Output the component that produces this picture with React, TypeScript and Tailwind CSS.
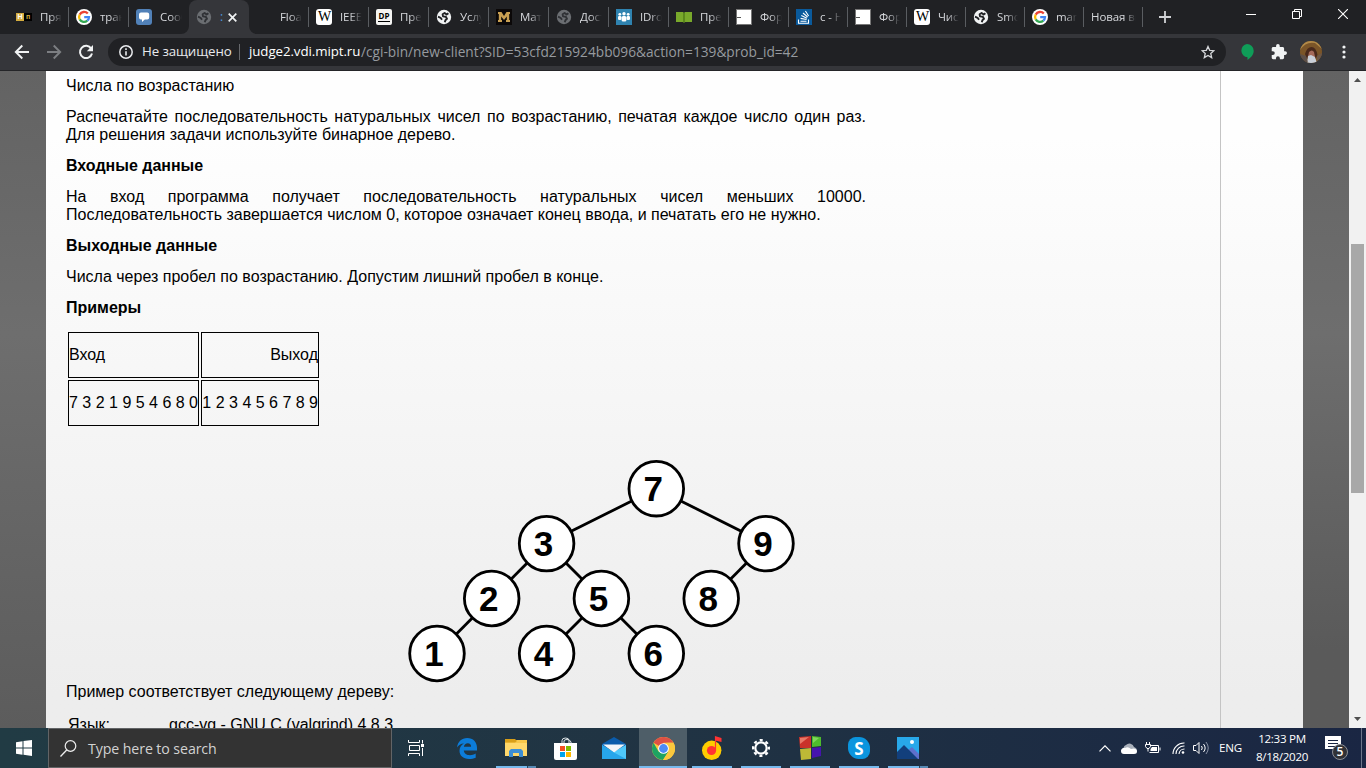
import type { ReactNode } from "react";

const Google = () => (
  <svg className="size-4" viewBox="0 0 16 16">
    <circle cx="8" cy="8" r="8" fill="#fff" />
    <g fill="none" strokeWidth="2.3">
      <path d="M11.8 4.6A5 5 0 0 0 3.7 5.6" stroke="#ea4335" />
      <path d="M3.7 5.6a5 5 0 0 0 0 4.8" stroke="#fbbc05" />
      <path d="M3.7 10.4a5 5 0 0 0 7.6 1.3" stroke="#34a853" />
      <path d="M11.3 11.7A5 5 0 0 0 13 8.2H8.2" stroke="#4285f4" />
    </g>
  </svg>
);

const Globe = ({ dim }: { dim?: boolean }) => (
  <svg className="size-4" viewBox="0 0 16 16">
    <circle cx="8" cy="8" r="7.2" fill={dim ? "#6b6e72" : "#f1f3f4"} />
    <g fill="none" stroke={dim ? "#303236" : "#202124"} strokeWidth="1.9" strokeLinejoin="round">
      <path d="M12.4 4.2L10.6 5.6 8.6 4 6.600 5.200 7 7.400 9.800 7.800 11 9.800 9.400 11.200 8.800 13.200" />
      <path d="M2 7.600L4.600 8.800 6 10.800" />
    </g>
  </svg>
);

const Wiki = () => (
  <span className="flex size-4 items-center justify-center rounded-[3px] bg-white font-['Liberation_Serif',serif] text-[14px] leading-none tracking-[-1px] text-black">
    W
  </span>
);

const Page = () => (
  <svg className="size-4" viewBox="0 0 16 16">
    <rect x=".5" y=".5" width="15" height="15" fill="#fff" stroke="#777" />
    <path d="M1 8.5h4" stroke="#555" />
  </svg>
);

const Gold = () => (
  <span className="flex h-2 w-4 text-[7px] leading-[8px] font-bold font-['Liberation_Sans',sans-serif]">
    <span className="w-2 bg-[#d5ad3f] text-center text-white">Н</span>
    <span className="w-2 bg-black text-center text-[#d5ad3f]">п</span>
  </span>
);

const Chat = () => (
  <svg className="size-4" viewBox="0 0 16 16">
    <rect width="16" height="16" rx="3" fill="#5181b8" />
    <path d="M5 3.5h6.2a2 2 0 0 1 2 2v3a2 2 0 0 1-2 2H8.800L6 13v-2.500H5a2 2 0 0 1-2-2v-3a2 2 0 0 1 2-2Z" fill="#fff" />
  </svg>
);

const Dp = () => (
  <span className="flex size-4 flex-col items-center rounded-[2px] bg-[#f4f4f2] pt-[3px] font-['Open_Sans',sans-serif] text-[8px] leading-[8px] font-bold text-black">
    DP
    <span className="mt-px h-px w-3 bg-black" />
  </span>
);

const LetterM = () => (
  <svg className="size-4" viewBox="0 0 16 16">
    <rect width="16" height="16" fill="#0b0808" />
    <path d="M2 3h3.500L8 7l2.500-4H14v2h-.8v6h.8v2h-4v-2h.8V7.500L8 11 5.200 7.500V11H6v2H2v-2h.8V5H2Z" fill="#c9a052" />
  </svg>
);

const People = () => (
  <svg className="size-4" viewBox="0 0 16 16">
    <rect width="16" height="16" fill="#2f83b0" />
    <g fill="#fff">
      <circle cx="3.800" cy="5.300" r="1.400" />
      <circle cx="8" cy="4.800" r="1.700" />
      <circle cx="12.200" cy="5.300" r="1.400" />
      <rect x="2" y="7" width="3.400" height="4" rx="1.200" />
      <rect x="5.600" y="7" width="4.800" height="5.600" rx="1.500" />
      <rect x="10.600" y="7" width="3.400" height="4" rx="1.200" />
    </g>
  </svg>
);

const Book = () => (
  <svg className="size-4" viewBox="0 0 16 16">
    <path d="M0 3h7l1 1 1-1h7v10H9l-1 .8L7 13H0Z" fill="#79a92b" />
    <path d="M8 4v9.500" stroke="#4f7a16" strokeWidth="1.400" />
  </svg>
);

const Stack = () => (
  <svg className="size-4" viewBox="0 0 16 16">
    <rect width="16" height="16" fill="#0a5a9c" />
    <path d="M2.500 10.500v3.800h10v-3.800M4.500 12.300h6M4.600 9.400l6 1.100M5.300 6.600l5.600 2.600M7 4l4.600 4M9.400 2l3.200 5" fill="none" stroke="#fff" strokeWidth="1.100" />
  </svg>
);

type TabInfo = { icon?: ReactNode; title: string; narrow?: boolean; blank?: boolean };

const before: TabInfo[] = [
  { icon: <Gold />, title: "Прямая" },
  { icon: <Google />, title: "транс" },
];
const after: TabInfo[] = [
  { blank: true, title: "Float" },
  { icon: <Wiki />, title: "IEEE" },
  { icon: <Dp />, title: "Пред" },
  { icon: <Globe />, title: "Услуги" },
  { icon: <LetterM />, title: "Мате" },
  { icon: <Globe dim />, title: "Дост" },
  { icon: <People />, title: "IDroo" },
  { icon: <Book />, title: "Пред" },
  { icon: <Page />, title: "Форм" },
  { icon: <Stack />, title: "c - Н", narrow: true },
  { icon: <Page />, title: "Форм", narrow: true },
  { icon: <Wiki />, title: "Числ", narrow: true },
  { icon: <Globe />, title: "Smok", narrow: true },
  { icon: <Google />, title: "man", narrow: true },
  { title: "Новая вк", narrow: true },
];

function Tab({ icon, title, narrow, blank, plain }: TabInfo & { plain?: boolean }) {
  return (
    <div className={`flex h-[34px] shrink-0 items-center pl-[7px] ${narrow ? "w-[59px]" : "w-[60px]"}`}>
      {(icon || blank) && <span className="mr-2 flex size-4 shrink-0 items-center justify-center">{icon}</span>}
      <span className="min-w-0 flex-1 overflow-hidden whitespace-nowrap text-[11.500px] tracking-[-0.100px] text-[#d6d8dc] [mask-image:linear-gradient(to_left,transparent,black_12px)]">
        {title}
      </span>
      <span className={`ml-[6px] h-5 w-px ${plain ? "bg-transparent" : "bg-[#5a5d61]"}`} />
    </div>
  );
}

function TabStrip() {
  return (
    <div className="flex h-[34px] bg-[#202124] pl-[9px]">
      {before.map((t, i) => (
        <Tab key={i} {...t} />
      ))}
      <Tab icon={<Chat />} title="Сооб" plain />
      <div className="relative flex h-[34px] w-[60px] shrink-0 items-center rounded-t-lg bg-[#35363a] pl-[7px]">
        <svg className="absolute bottom-0 -left-2 size-2" viewBox="0 0 8 8">
          <path d="M8 0v8H0a8 8 0 0 0 8-8Z" fill="#35363a" />
        </svg>
        <svg className="absolute -right-2 bottom-0 size-2" viewBox="0 0 8 8">
          <path d="M0 0v8h8a8 8 0 0 1-8-8Z" fill="#35363a" />
        </svg>
        <Globe dim />
        <span className="ml-2 w-[3px] overflow-hidden text-[12px] text-[#4f9be0]">:</span>
        <svg className="ml-[5px] size-[9px]" viewBox="0 0 9 9">
          <path d="M.7.7l7.600 7.600M8.300.7L.7 8.300" stroke="#f1f3f4" strokeWidth="1.700" />
        </svg>
      </div>
      {after.map((t, i) => (
        <Tab key={i} {...t} />
      ))}
      <svg className="mt-[11px] ml-4 size-3" viewBox="0 0 12 12">
        <path d="M6 0v12M0 6h12" stroke="#d0d2d5" strokeWidth="1.800" />
      </svg>
      <div className="mt-[9px] ml-[75px] flex gap-9 text-white">
        <svg className="size-2.5" viewBox="0 0 10 10">
          <path d="M0 5.500h10" stroke="currentColor" />
        </svg>
        <svg className="size-2.5" viewBox="0 0 10 10">
          <path d="M.5 2.500h7v7h-7ZM2.500 2.500v-2h7v7h-2" fill="none" stroke="currentColor" />
        </svg>
        <svg className="size-2.5" viewBox="0 0 10 10">
          <path d="M0 0l10 10M10 0L0 10" stroke="currentColor" strokeWidth="1.100" />
        </svg>
      </div>
    </div>
  );
}

function Toolbar() {
  return (
    <div className="flex h-[37px] items-start border-b border-[#242528] bg-[#35363a] pt-1">
      <div className="flex h-7 w-[108px] items-center gap-4 pl-[14px]">
        <svg className="size-4" viewBox="0 0 16 16">
          <path d="M15 8H2M8.300 1.500L1.800 8l6.500 6.500" fill="none" stroke="#f1f3f4" strokeWidth="1.900" />
        </svg>
        <svg className="size-4" viewBox="0 0 16 16">
          <path d="M1 8h13M7.700 1.500L14.200 8l-6.500 6.500" fill="none" stroke="#7c7e82" strokeWidth="1.900" />
        </svg>
        <svg className="size-4" viewBox="0 0 16 16">
          <path d="M13.200 4.600A6.100 6.100 0 1 0 14 9.500" fill="none" stroke="#f1f3f4" strokeWidth="2" />
          <path d="M15 1v6.200H8.800Z" fill="#f1f3f4" />
        </svg>
      </div>
      <div className="flex h-7 w-[1118px] items-center rounded-full bg-[#202124] pl-[11px] text-[13.300px] whitespace-nowrap">
        <svg className="size-[14px]" viewBox="0 0 14 14">
          <circle cx="7" cy="7" r="6.200" fill="none" stroke="#e8eaed" strokeWidth="1.500" />
          <path d="M7 6.200v4.300M7 3.300v1.600" stroke="#e8eaed" strokeWidth="1.600" />
        </svg>
        <span className="ml-[9px] w-[97px] tracking-[-0.100px] text-[#e8eaed]">Не защищено</span>
        <span className="h-4 w-px bg-[#66686c]" />
        <span className="ml-[9px] w-[112px] tracking-[-0.080px] text-white">judge2.vdi.mipt.ru</span>
        <span className="flex-1 text-[13.700px] text-[#969a9f]">
          /cgi-bin/new-client?SID=53cfd215924bb096&amp;action=139&amp;prob_id=42
        </span>
        <svg className="mr-[11px] size-[14px]" viewBox="0 0 24 24">
          <path d="M12 2.500l2.900 6.600 7.200.7-5.400 4.800 1.600 7L12 17.800l-6.300 3.800 1.600-7L1.900 9.800l7.200-.7Z" fill="none" stroke="#d6d8db" strokeWidth="2.200" />
        </svg>
      </div>
      <div className="flex h-7 flex-1 items-center">
        <svg className="ml-[14px] h-4 w-[14px]" viewBox="0 0 14 16">
          <path d="M7 0a6.700 6.700 0 0 1 6.700 6.700C13.700 10.500 11 13.500 7.500 16v-2.700A6.700 6.700 0 0 1 7 0Z" fill="#0f9d58" />
        </svg>
        <svg className="ml-[17px] size-4" viewBox="1 1 22 22">
          <path d="M20.500 11H19V7c0-1.100-.9-2-2-2h-4V3.500a2.500 2.500 0 0 0-5 0V5H4c-1.100 0-2 .9-2 2v3.800h1.500a2.700 2.700 0 0 1 0 5.400H2V20c0 1.100.9 2 2 2h3.800v-1.500a2.700 2.700 0 0 1 5.400 0V22H17c1.100 0 2-.9 2-2v-4h1.500a2.500 2.500 0 0 0 0-5Z" fill="#f1f3f4" />
        </svg>
        <svg className="ml-[13px] size-[22px]" viewBox="0 0 22 22">
          <defs>
            <clipPath id="avatar"><circle cx="11" cy="11" r="11" /></clipPath>
          </defs>
          <g clipPath="url(#avatar)">
            <rect width="22" height="22" fill="#7b5528" />
            <path d="M0 9Q6 0 15 2l7 6V0H0Z" fill="#b28a48" />
            <path d="M5 13Q7 6 11.500 6t6 8l-2 4H7Z" fill="#49291b" />
            <path d="M9 11q3-3 5 0l1 5H8Z" fill="#a56a5a" />
            <path d="M8 15l3-1 4 2 2 6H7Z" fill="#c9cfd8" />
            <path d="M0 13l6 2 2 7H0Z" fill="#5d504a" />
            <path d="M22 12l-5 3v7h5Z" fill="#6c5747" />
          </g>
        </svg>
        <svg className="ml-5 h-[14px] w-1" viewBox="0 0 4 14">
          <g fill="#f1f3f4"><circle cx="2" cy="2" r="1.600" /><circle cx="2" cy="7" r="1.600" /><circle cx="2" cy="12" r="1.600" /></g>
        </svg>
      </div>
    </div>
  );
}

const nodes = [
  { v: 7, x: 656.300, y: 488.700 }, { v: 3, x: 546.600, y: 543.600 }, { v: 9, x: 766, y: 543.600 },
  { v: 2, x: 491.700, y: 598.500 }, { v: 5, x: 601.400, y: 598.500 }, { v: 8, x: 711.200, y: 598.500 },
  { v: 1, x: 437, y: 653.500 }, { v: 4, x: 546.600, y: 653.500 }, { v: 6, x: 656.300, y: 653.500 },
];
const edges = [[0, 1], [0, 2], [1, 3], [1, 4], [2, 5], [3, 6], [4, 7], [4, 8]];

function Tree() {
  return (
    <svg className="block h-[226px] w-[392px]" viewBox="406 458 392 226">
      {edges.map(([a, b]) => (
        <line key={`${a}-${b}`} x1={nodes[a].x} y1={nodes[a].y} x2={nodes[b].x} y2={nodes[b].y} stroke="#000" strokeWidth="2.800" />
      ))}
      {nodes.map((n) => (
        <g key={n.v}>
          <circle cx={n.x} cy={n.y} r="27.300" fill="#fff" stroke="#000" strokeWidth="2.800" />
          <text x={n.x - 3} y={n.y + 12.300} textAnchor="middle" className="font-['Liberation_Sans',sans-serif] text-[35px] font-bold">
            {n.v}
          </text>
        </g>
      ))}
    </svg>
  );
}

function Problem() {
  return (
    <main className="flex min-w-0 flex-1 overflow-hidden bg-linear-to-b from-[#fefefe] from-10% to-[#ededed] to-95% font-['Liberation_Sans',sans-serif] text-[16px] leading-[18px] text-black">
      <div className="w-[1175px] shrink-0 border-r border-[#c4c4c4] pt-[6px] pl-5">
        <div className="flex w-[800px] flex-col gap-[13px] text-justify">
          <p>Числа по возрастанию</p>
          <p>Распечатайте последовательность натуральных чисел по возрастанию, печатая каждое число один раз. Для решения задачи используйте бинарное дерево.</p>
          <p className="font-bold">Входные данные</p>
          <p>На вход программа получает последовательность натуральных чисел меньших 10000. Последовательность завершается числом 0, которое означает конец ввода, и печатать его не нужно.</p>
          <p className="font-bold">Выходные данные</p>
          <p>Числа через пробел по возрастанию. Допустим лишний пробел в конце.</p>
          <p className="font-bold">Примеры</p>
        </div>
        <div className="mt-[15px] ml-[2px] grid w-[251px] grid-cols-[131px_118px] grid-rows-[46px_46px] gap-[2px] leading-[44px] whitespace-nowrap">
          <div className="border border-black">Вход</div>
          <div className="border border-black text-right">Выход</div>
          <div className="border border-black">7 3 2 1 9 5 4 6 8 0</div>
          <div className="border border-black text-right">1 2 3 4 5 6 7 8 9</div>
        </div>
        <div className="mt-8 ml-[340px]"><Tree /></div>
        <p className="-mt-px">Пример соответствует следующему дереву:</p>
        <div className="mt-[15px] ml-[2px] flex">
          <span className="w-[101px]">Язык:</span>
          <span>gcc-vg - GNU C (valgrind) 4.8.3</span>
        </div>
      </div>
    </main>
  );
}

function Scrollbar() {
  return (
    <div className="flex w-[17px] shrink-0 flex-col items-center bg-[#f1f1f1]">
      <svg className="mt-[7px] h-1 w-[7px]" viewBox="0 0 7 4"><path d="M0 4L3.500 0 7 4Z" fill="#505050" /></svg>
      <div className="mt-[162px] h-[249px] w-[13px] bg-[#a8a8a8]" />
      <svg className="mt-auto mb-[7px] h-1 w-[7px]" viewBox="0 0 7 4"><path d="M0 0L3.500 4 7 0Z" fill="#505050" /></svg>
    </div>
  );
}

const Edge = () => (
  <svg className="h-[21px] w-5" viewBox="0 0 20 21">
    <path d="M0 9.500C.8 3.700 4.700 0 10.200 0 16.200 0 20 4.200 20 9.800V12.500H6.800c.3 3 2.800 4.700 6.200 4.700 2 0 3.900-.5 5.700-1.600v4.100C16.700 20.600 14.500 21 12 21 6 21 2.500 17.500 2.500 12.800c0-3.100 1.600-5.800 4.400-7.200C3.800 5.700 1.400 7.400 0 9.500ZM6.900 8.700h7.200c0-2.200-1.100-3.500-3.300-3.500-2.100 0-3.500 1.400-3.900 3.500Z" fill="#0c7cd9" />
  </svg>
);
const Explorer = () => (
  <svg className="h-[19px] w-[22px]" viewBox="0 0 22 19">
    <path d="M0 1h22v16H0Z" fill="#f8c74a" />
    <path d="M0 0h10l2 2-2 1.500H0Z" fill="#d99f18" />
    <path d="M0 4h22v13H0Z" fill="#ffd86b" />
    <path d="M4 18v-6l2-2h10l2 2v6h-4v-4H8v4Z" fill="#3d8ed4" />
  </svg>
);
const Store = () => (
  <svg className="h-[23px] w-[23px]" viewBox="0 0 23 23">
    <path d="M8 6V3.500Q8 1 11.500 1T15 3.500V6M10 6V4q0-1.500 3-1.500T17 5v1" fill="none" stroke="#dce3e6" />
    <path d="M0 6h23v15q0 2-2 2H2q-2 0-2-2Z" fill="#fff" />
    <path d="M6 9h5v5H6Z" fill="#f25022" /><path d="M12 9h5v5h-5Z" fill="#7fba00" />
    <path d="M6 15h5v5H6Z" fill="#00a4ef" /><path d="M12 15h5v5h-5Z" fill="#ffb900" />
  </svg>
);
const Mail = () => (
  <svg className="h-[22px] w-6" viewBox="0 0 24 22">
    <path d="M0 7l12-7 12 7v4H0Z" fill="#0b5cab" />
    <path d="M0 8v14h24V8l-12 7Z" fill="#2aaef0" />
    <path d="M0 22L24 8v14Z" fill="#4fc8fa" />
    <path d="M1 7.500h22L12 15.500Z" fill="#f3f6f9" />
    <path d="M0 8l12 7.500L24 22H0Z" fill="#27a5ea" />
  </svg>
);
const Chrome = () => (
  <svg className="size-[23px]" viewBox="0 0 24 24">
    <circle cx="12" cy="12" r="12" fill="#fbc83d" />
    <path d="M12 12L1.600 6A12 12 0 0 1 22.400 6H12Z" fill="#dd5144" />
    <path d="M1.600 6A12 12 0 0 0 11.500 24L17.200 15 6.800 15Z" fill="#1ea362" />
    <path d="M22.400 6A12 12 0 0 1 11.500 24l5.700-9L15 6Z" fill="#fbc83d" />
    <circle cx="12" cy="12" r="5.600" fill="#fff" /><circle cx="12" cy="12" r="4.600" fill="#4c8bf5" />
  </svg>
);
const Music = () => (
  <svg className="h-6 w-5" viewBox="0 0 20 24">
    <circle cx="9.700" cy="14.300" r="9.700" fill="#ffcc00" /><circle cx="9.500" cy="14.500" r="4.600" fill="#ff3333" />
    <path d="M12.900 14V0l6.600 2v4l-5.400-1.200V14Z" fill="#ff3333" />
  </svg>
);
const Settings = () => (
  <svg className="size-[18px]" viewBox="0 0 18 18">
    <circle cx="9" cy="9" r="7.900" fill="none" stroke="#fff" strokeWidth="2.200" strokeDasharray="3.100 3.100" strokeDashoffset="1.550" />
    <circle cx="9" cy="9" r="5.700" fill="none" stroke="#fff" strokeWidth="2.200" />
  </svg>
);
const Blocks = () => (
  <svg className="h-6 w-[22px]" viewBox="0 0 22 24">
    <path d="M0 1L12 0v12L1 12Z" fill="#c9322a" /><path d="M13 0l9 1v9l-9 1Z" fill="#4ebc2c" />
    <path d="M1 13l11-1v11L2 24Z" fill="#bdb936" /><path d="M13 12l9-1v9l-9 2Z" fill="#4614ae" />
    <path d="M1 2l9-1-9 7Z" fill="#e77967" /><path d="M14 1l6 1-6 5Z" fill="#7fd85b" />
  </svg>
);
const Skype = () => (
  <span className="relative flex size-[22px] items-center justify-center rounded-full bg-[#0b95de] font-['Open_Sans',sans-serif] text-[17px] leading-none font-bold text-white">
    <span className="absolute top-0 left-0 size-4 rounded-full bg-[#0b95de]" />
    <span className="absolute right-0 bottom-0 size-4 rounded-full bg-[#0b95de]" />
    <span className="relative">S</span>
  </span>
);
const Photos = () => (
  <svg className="size-[22px]" viewBox="0 0 22 22">
    <rect width="22" height="22" fill="#28a8ea" />
    <path d="M10 14l5-4 7 7v5H10Z" fill="#5f70cc" /><path d="M0 15l7-7 14 14H0Z" fill="#123f7c" />
    <circle cx="15" cy="5" r="2" fill="#fff" />
  </svg>
);

const apps: { icon: ReactNode; state: "idle" | "open" | "multi" | "active" }[] = [
  { icon: <Edge />, state: "idle" }, { icon: <Explorer />, state: "multi" }, { icon: <Store />, state: "idle" },
  { icon: <Mail />, state: "idle" }, { icon: <Chrome />, state: "active" }, { icon: <Music />, state: "open" },
  { icon: <Settings />, state: "open" }, { icon: <Blocks />, state: "open" }, { icon: <Skype />, state: "open" },
  { icon: <Photos />, state: "multi" },
];

function Taskbar() {
  return (
    <footer className="flex h-10 shrink-0 bg-linear-to-r from-[#213b44] via-[#203343] to-[#1a2643] text-white">
      <div className="flex w-12 items-center justify-center">
        <svg className="size-4" viewBox="0 0 16 16"><path d="M0 2.300L6.500 1.300v6.200H0ZM7.500 1.100L16 0v7.500H7.500ZM0 8.500h6.500v6.200L0 13.700ZM7.500 8.500H16V16l-8.500-1.200Z" fill="#fff" /></svg>
      </div>
      <div className="flex w-[344px] items-center border border-[#626466] bg-[#333] pl-[11px]">
        <svg className="size-[17px]" viewBox="0 0 17 17"><circle cx="10.500" cy="6" r="5.300" fill="none" stroke="#eee" strokeWidth="1.200" /><path d="M6.700 10L.5 16.500" stroke="#eee" strokeWidth="1.300" /></svg>
        <span className="ml-[11px] pt-px text-[14.200px] tracking-[-0.100px] text-[#d2d2d2]">Type here to search</span>
      </div>
      <div className="flex w-[51px] items-center pl-4">
        <svg className="h-4 w-[17px]" viewBox="0 0 17 16" fill="none" stroke="#fff"><path d="M.5 0v2.500h11V0M.5 16v-2.500h11V16M1.500 5.500h10v5h-10ZM14.500 0v3.500M14.500 8v8" /><path d="M13 4h3v3h-3Z" fill="#fff" stroke="none" /></svg>
      </div>
      <div className="flex gap-px">
        {apps.map((a, i) => (
          <div key={i} className={`flex h-10 w-12 flex-col items-center ${a.state === "active" ? "bg-[#4e5e68]" : ""}`}>
            <span className="flex h-[38px] items-center justify-center pt-0.5">{a.icon}</span>
            {a.state !== "idle" && (
              <span className={`flex h-0.5 justify-end bg-[#76b9ed] ${a.state === "active" ? "w-12" : "w-10"}`}>
                {a.state === "multi" && <span className="w-[9px] border-l border-[#2b4558] bg-[#5689b4]" />}
              </span>
            )}
          </div>
        ))}
      </div>
      <div className="ml-auto flex w-[267px] items-center text-[11.600px] leading-[18px]">
        <svg className="h-[7px] w-3" viewBox="0 0 12 7"><path d="M.5 6.300L6 .8l5.500 5.500" fill="none" stroke="#fff" strokeWidth="1.200" /></svg>
        <svg className="ml-[10px] h-[11px] w-4" viewBox="0 0 16 11"><path d="M3 6a3.200 3.200 0 0 1 2-4A4.700 4.700 0 0 1 13 4q3 1 3 4H5Z" fill="#a9b0bb" /><path d="M0 8a3 3 0 0 1 4-3q3-2 6 1l3-.5Q16 6 16 8.500 16 11 13 11H3Q0 11 0 8Z" fill="#fff" /></svg>
        <svg className="ml-2 h-3 w-4" viewBox="0 0 16 12"><path d="M5 3.500h8.500v7h-9M15 5.500v3M1.500 0v2M4.500 0v2M.5 2.500h5v2l-1.500 2H2l-1.500-2ZM3 6v3.500" fill="none" stroke="#fff" /><path d="M7 5h5v4H5.500V7Z" fill="#fff" /></svg>
        <svg className="ml-[11px] h-3 w-[13px]" viewBox="0 0 13 12" fill="none" stroke="#fff" strokeWidth="1.100"><path d="M1 12A11 11 0 0 1 12.500 1M4 12a8 8 0 0 1 8.500-8M7 12a5.500 5.500 0 0 1 5.500-5" /><circle cx="11" cy="10.500" r="1.300" fill="#fff" stroke="none" /></svg>
        <svg className="ml-2 h-[14px] w-4" viewBox="0 0 16 14" fill="none" stroke="#fff"><path d="M.5 4.500H3l3-3v11l-3-3H.5ZM8.500 5q1.500 2 0 4M10.500 3q3.300 4 0 8" /><path d="M13 1q4.500 6 0 12" stroke="#8891a5" /></svg>
        <span className="ml-[10px] w-6 tracking-[-0.200px]">ENG</span>
        <span className="ml-[10px] w-[58px] text-center tracking-[-0.300px] whitespace-nowrap">12:33 PM<br />8/18/2020</span>
        <div className="relative ml-[14px] h-6 w-6">
          <svg className="absolute top-0 left-0 h-4 w-4" viewBox="0 0 16 16"><path d="M0 0h16v13h-4l-3 3v-3H0Z" fill="#fff" /><path d="M3 4.500h10M3 7.500h10M3 10.500h7" stroke="#1a2643" /></svg>
          <span className="absolute top-[8px] left-[7px] flex size-4 items-center justify-center rounded-full border border-[#8c8f96] bg-[#303136] text-[12px] leading-none font-semibold">5</span>
        </div>
        <span className="ml-auto mr-1 h-10 w-px bg-[#6d768a]" />
      </div>
    </footer>
  );
}

export default function App() {
  return (
    <div className="flex h-[768px] w-[1366px] flex-col overflow-hidden font-['Open_Sans',sans-serif]">
      <TabStrip />
      <Toolbar />
      <div className="flex min-h-0 flex-1">
        <div className="w-[46px] shrink-0 bg-linear-to-b from-[#636363] via-[#6e6e6e] via-40% to-[#5c5c5c]" />
        <Problem />
        <div className="w-[46px] shrink-0 bg-linear-to-b from-[#636363] via-[#6e6e6e] via-40% to-[#5a5a5a] to-88%" />
        <Scrollbar />
      </div>
      <Taskbar />
    </div>
  );
}
